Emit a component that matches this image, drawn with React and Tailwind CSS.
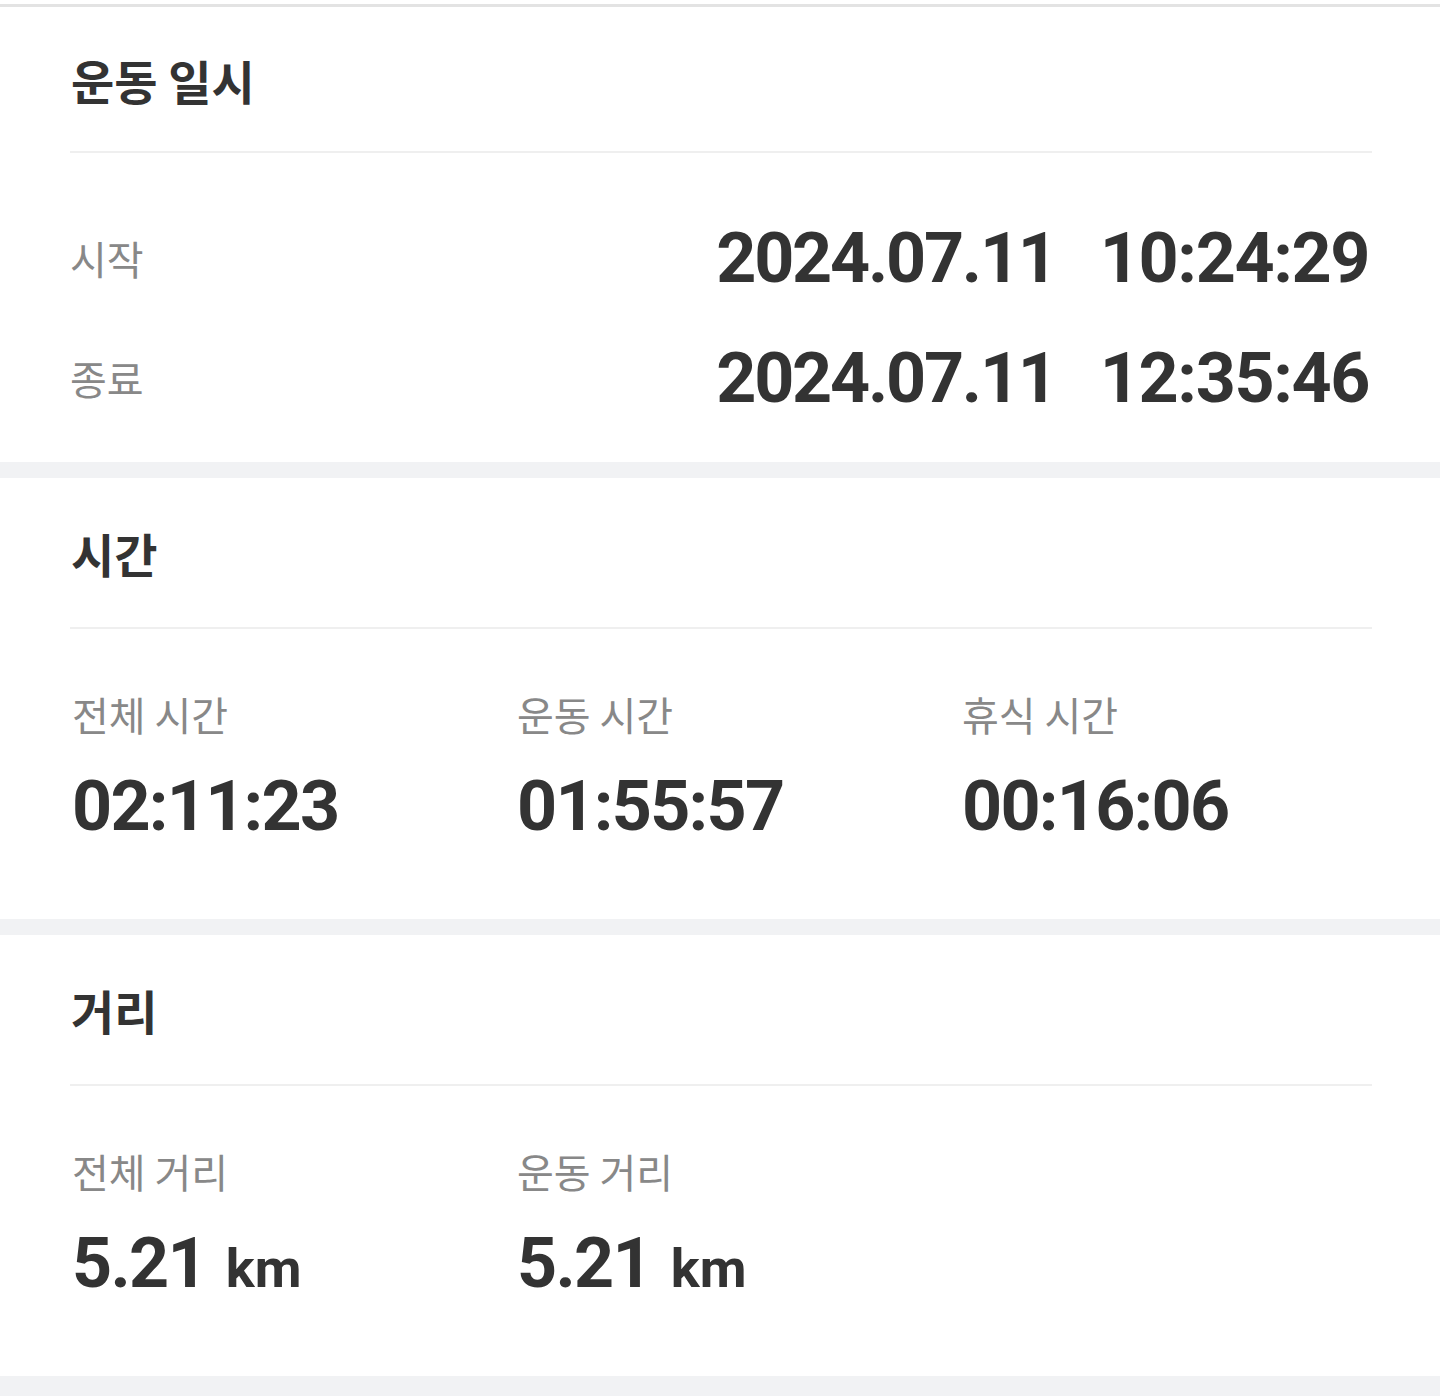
const KR = { fontFamily: '"Noto Sans CJK KR", "Noto Sans", sans-serif' };
const NUM = { fontFamily: 'Roboto, "Noto Sans", sans-serif' };

function SectionHeader({ title, height }) {
  return (
    <>
      <div className={`flex items-center px-[71px] ${height}`}>
        <h2 className="text-[47px] font-bold leading-none tracking-[0em] text-[#333333]" style={KR}>
          {title}
        </h2>
      </div>
      <div className="ml-[70px] mr-[68px] h-[2px] bg-[#efefef]" />
    </>
  );
}

function Stat({ label, value, unit }) {
  return (
    <div className="flex flex-col">
      <span className="text-[40px] leading-[46px] tracking-[0em] text-[#888888]" style={KR}>
        {label}
      </span>
      <div className="mt-[34px] flex items-baseline gap-[20px] text-[#333333]" style={NUM}>
        <span className="text-[70px] font-bold leading-[70px] tracking-[-0.025em]">{value}</span>
        {unit && <span className="text-[54px] font-bold leading-none">{unit}</span>}
      </div>
    </div>
  );
}

export default function App() {
  const rows = [
    { label: '시작', date: '2024.07.11', time: '10:24:29' },
    { label: '종료', date: '2024.07.11', time: '12:35:46' },
  ];

  return (
    <div className="min-h-[1396px] w-[1440px] bg-[#f1f2f4]">
      <div className="h-[4px] bg-white" />
      <div className="h-[3px] bg-[#e3e3e3]" />

      {/* 운동 일시 */}
      <section className="bg-white">
        <SectionHeader title="운동 일시" height="h-[144px]" />
        <div className="pt-[45px] pb-[24px]">
          {rows.map((r) => (
            <div key={r.label} className="flex h-[120px] items-center justify-between pl-[70px] pr-[71px]">
              <span className="text-[40px] tracking-[0em] text-[#888888]" style={KR}>
                {r.label}
              </span>
              <div className="flex gap-[44px] text-[70px] font-bold leading-none text-[#333333]" style={NUM}>
                <span className="tracking-[-0.032em]">{r.date}</span>
                <span className="tracking-[-0.02em]">{r.time}</span>
              </div>
            </div>
          ))}
        </div>
      </section>

      <div className="h-[16px]" />

      {/* 시간 */}
      <section className="bg-white">
        <SectionHeader title="시간" height="h-[149px]" />
        <div className="grid grid-cols-[445px_445px_1fr] pl-[72px] pt-[62px] pb-[78px]">
          <Stat label="전체 시간" value="02:11:23" />
          <Stat label="운동 시간" value="01:55:57" />
          <Stat label="휴식 시간" value="00:16:06" />
        </div>
      </section>

      <div className="h-[16px]" />

      {/* 거리 */}
      <section className="bg-white">
        <SectionHeader title="거리" height="h-[149px]" />
        <div className="grid grid-cols-[445px_445px_1fr] pl-[72px] pt-[62px] pb-[78px]">
          <Stat label="전체 거리" value="5.21" unit="km" />
          <Stat label="운동 거리" value="5.21" unit="km" />
        </div>
      </section>
    </div>
  );
}
